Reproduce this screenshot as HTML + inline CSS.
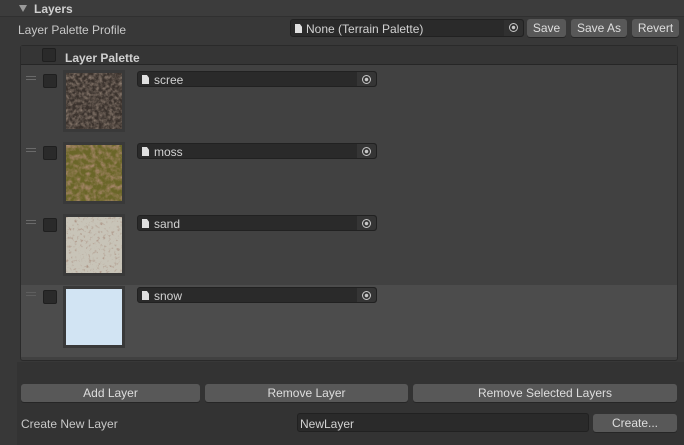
<!DOCTYPE html>
<html><head><style>
*{box-sizing:border-box;margin:0;padding:0}
body{width:684px;height:445px;background:#383838;font-family:"Liberation Sans",sans-serif;font-size:12px;color:#c8c8c8;position:relative;overflow:hidden}
.a{position:absolute}
.btn{position:absolute;background:#585858;border-radius:3px;color:#dedede;text-align:center;line-height:19px;box-shadow:0 1px 0 #262626}
.field{position:absolute;background:#2a2a2a;border:1px solid #212121;border-radius:3px;color:#d2d2d2}
.field .doc{position:absolute;left:4px;top:3px;width:7px;height:9px;background:#e0e0e0;clip-path:polygon(0 0,70% 0,100% 30%,100% 100%,0 100%)}
.field .t{position:absolute;left:14px;top:1px;line-height:15px}
.field .tg{position:absolute;right:0;top:0;width:19px;height:100%;background:#353535;border-radius:0 3px 3px 0}
.field .tg:after{content:"";position:absolute;left:5px;top:3px;width:7px;height:7px;border:1px solid #c8c8c8;border-radius:50%;background:radial-gradient(circle,#c8c8c8 0 1.5px,transparent 2px)}
.cb{position:absolute;width:14px;height:14px;background:#2a2a2a;border:1px solid #1f1f1f;border-radius:2px}
.hd{position:absolute;width:10px;height:4px;border-top:1px solid #6a6a6a;border-bottom:1px solid #6a6a6a}
.th{position:absolute;width:62px;height:62px;background:#393939;padding:3px}
.th svg{display:block}
</style></head><body>
<div class="a" style="left:0;top:0;width:684px;height:17px;background:#3c3c3c;border-bottom:1px solid #303030"></div>
<div class="a" style="left:19px;top:5px;width:0;height:0;border-left:4px solid transparent;border-right:4px solid transparent;border-top:7px solid #9a9a9a"></div>
<div class="a" style="left:34px;top:2px;font-weight:bold;color:#d0d0d0">Layers</div>
<div class="a" style="left:18px;top:23px">Layer Palette Profile</div>
<div class="field" style="left:290px;top:19px;width:234px;height:18px"><div class="doc" style="top:4px"></div><div class="t" style="line-height:17px;left:15px">None (Terrain Palette)</div><div class="tg" style="background:#303030"></div></div>
<div class="btn" style="left:527px;top:19px;width:39px;height:18px">Save</div>
<div class="btn" style="left:571px;top:19px;width:56px;height:18px">Save As</div>
<div class="btn" style="left:632px;top:19px;width:47px;height:18px">Revert</div>

<div class="a" style="left:20px;top:45px;width:658px;height:316px;background:#414141;border:1px solid #2a2a2a;border-radius:3px"></div>
<div class="a" style="left:21px;top:46px;width:656px;height:19px;background:#353535;border-bottom:1px solid #262626"></div>
<div class="cb" style="left:42px;top:48px"></div>
<div class="a" style="left:65px;top:51px;font-weight:bold;color:#d0d0d0">Layer Palette</div>
<div class="a" style="left:21px;top:285px;width:656px;height:72px;background:#4c4c4c"></div>

<div class="hd" style="left:26px;top:76px"></div><div class="cb" style="left:43px;top:74px"></div>
<div class="th" style="left:63px;top:70px"><svg width="56" height="56"><filter id="f1"><feTurbulence type="fractalNoise" baseFrequency="0.3" numOctaves="3" seed="2"/><feColorMatrix values="0 0 0 0 0.45 0 0 0 0 0.35 0 0 0 0 0.28 1.2 0 0 0 -0.4"/></filter><rect width="56" height="56" fill="#3a322d"/><rect width="56" height="56" filter="url(#f1)"/></svg></div>
<div class="field" style="left:137px;top:71px;width:240px;height:16px"><div class="doc"></div><div class="t" style="left:16px">scree</div><div class="tg"></div></div>

<div class="hd" style="left:26px;top:148px"></div><div class="cb" style="left:43px;top:146px"></div>
<div class="th" style="left:63px;top:142px"><svg width="56" height="56"><filter id="f2"><feTurbulence type="fractalNoise" baseFrequency="0.2" numOctaves="3" seed="5"/><feColorMatrix values="0 0 0 0 0.5 0 0 0 0 0.28 0 0 0 0 0.22 1.6 0 0 0 -0.6"/></filter><rect width="56" height="56" fill="#6a6628"/><rect width="56" height="56" filter="url(#f2)"/></svg></div>
<div class="field" style="left:137px;top:143px;width:240px;height:16px"><div class="doc"></div><div class="t" style="left:16px">moss</div><div class="tg"></div></div>

<div class="hd" style="left:26px;top:220px"></div><div class="cb" style="left:43px;top:218px"></div>
<div class="th" style="left:63px;top:214px"><svg width="56" height="56"><filter id="f3"><feTurbulence type="fractalNoise" baseFrequency="0.35" numOctaves="3" seed="9"/><feColorMatrix values="0 0 0 0 0.4 0 0 0 0 0.28 0 0 0 0 0.22 -3 0 0 0 1.3"/></filter><rect width="56" height="56" fill="#c8c4b8"/><rect width="56" height="56" filter="url(#f3)"/></svg></div>
<div class="field" style="left:137px;top:215px;width:240px;height:16px"><div class="doc"></div><div class="t" style="left:16px">sand</div><div class="tg"></div></div>

<div class="hd" style="left:26px;top:292px;opacity:.6"></div><div class="cb" style="left:43px;top:290px"></div>
<div class="th" style="left:63px;top:286px"><svg width="56" height="56"><rect width="56" height="56" fill="#d2e4f3"/></svg></div>
<div class="field" style="left:137px;top:287px;width:240px;height:16px"><div class="doc"></div><div class="t" style="left:16px">snow</div><div class="tg"></div></div>

<div class="a" style="left:17px;top:362px;width:667px;height:83px;background:#333333"></div>
<div class="btn" style="left:21px;top:384px;width:179px;height:18px">Add Layer</div>
<div class="btn" style="left:205px;top:384px;width:203px;height:18px">Remove Layer</div>
<div class="btn" style="left:413px;top:384px;width:264px;height:18px">Remove Selected Layers</div>
<div class="a" style="left:21px;top:417px">Create New Layer</div>
<div class="field" style="left:297px;top:413px;width:292px;height:19px"><div class="t" style="left:2px;line-height:18px">NewLayer</div></div>
<div class="btn" style="left:593px;top:414px;width:84px;height:18px">Create...</div>
</body></html>
